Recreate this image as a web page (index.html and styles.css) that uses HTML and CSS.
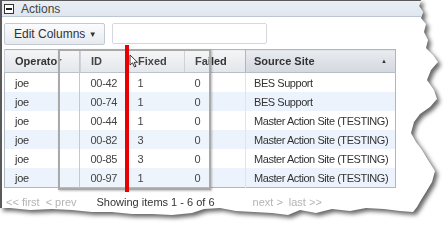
FILE: index.html
```html
<!DOCTYPE html>
<html lang="en">
<head>
    <meta charset="UTF-8">
    <title>Actions</title>
    <link rel="stylesheet" href="styles.css">
</head>
<body>

<div class="frame">
<div class="panel">

    <!-- panel title -->
    <div class="panel-head">
        <span class="collapse"></span>
        <span class="panel-title">Actions</span>
    </div>

    <!-- toolbar -->
    <div class="toolbar">
        <button class="edit-btn">Edit Columns <span class="caret">&#9660;</span></button>
        <input type="text" class="filter">
    </div>

    <!-- grid -->
    <div class="grid-wrap">
        <table class="grid">
            <colgroup>
                <col class="c-op"><col class="c-id"><col class="c-fx"><col class="c-fl"><col class="c-src">
            </colgroup>
            <thead>
                <tr>
                    <th>Operator</th>
                    <th>ID</th>
                    <th>Fixed</th>
                    <th>Failed</th>
                    <th class="sorted">Source Site <span class="sort">&#9650;</span></th>
                </tr>
            </thead>
            <tbody>
                <tr><td>joe</td><td>00-42</td><td>1</td><td>0</td><td class="src">BES Support</td></tr>
                <tr><td>joe</td><td>00-74</td><td>1</td><td>0</td><td class="src">BES Support</td></tr>
                <tr><td>joe</td><td>00-44</td><td>1</td><td>0</td><td class="src">Master Action Site (TESTING)</td></tr>
                <tr><td>joe</td><td>00-82</td><td>3</td><td>0</td><td class="src">Master Action Site (TESTING)</td></tr>
                <tr><td>joe</td><td>00-85</td><td>3</td><td>0</td><td class="src">Master Action Site (TESTING)</td></tr>
                <tr><td>joe</td><td>00-97</td><td>1</td><td>0</td><td class="src">Master Action Site (TESTING)</td></tr>
            </tbody>
        </table>

        <!-- column being dragged -->
        <div class="drag-ghost"><div class="ghost-line"></div></div>
        <div class="drop-marker"></div>
        <svg class="cursor" width="10" height="14" viewBox="0 0 10 14">
            <path d="M1 1 L1 11 L3.5 8.8 L5.5 13 L7 12.3 L5.2 8.3 L8.5 8.3 Z" fill="#fff" stroke="#222" stroke-width="0.9" stroke-linejoin="round"/>
        </svg>
    </div>

    <!-- paging -->
    <div class="pager">
        <span class="pg-link">&lt;&lt; first</span>
        <span class="pg-link">&lt; prev</span>
        <span class="pg-info">Showing items 1 - 6 of 6</span>
        <span class="pg-link">next &gt;</span>
        <span class="pg-link">last &gt;&gt;</span>
    </div>

</div>
</div>

</body>
</html>
```

FILE: styles.css
```css
body {
    margin: 0;
    background-color: #fff;
    font-family: "Liberation Sans", Arial, sans-serif;
    color: #333;
}

.frame {
    width: 444px;
    height: 240px;
    filter: drop-shadow(3px 3px 2px rgba(0, 0, 0, 0.6));
}

/* torn paper edge on the right and bottom */
.panel {
    width: 444px;
    height: 224px;
    box-sizing: border-box;
    background-color: #fff;
    border-left: 2px solid #5a5a5a;
    border-top: 1px solid #5a5a5a;
    clip-path: polygon(0 0, 421px 0, 419px 6px, 423px 12px, 421px 18px, 426px 24px, 424px 32px, 428px 40px, 426px 48px, 433px 55px, 438px 62px, 431px 70px, 427px 80px, 434px 90px, 437px 99px, 430px 107px, 420px 114px, 414px 122px, 411px 133px, 416px 142px, 422px 150px, 428px 160px, 435px 171px, 432px 182px, 426px 192px, 421px 200px, 417px 207px, 413px 212px, 400px 211px, 384px 209px, 366px 208px, 350px 211px, 332px 209px, 316px 213px, 300px 210px, 288px 215px, 272px 213px, 254px 212px, 236px 211px, 220px 208px, 204px 209px, 192px 213px, 172px 215px, 152px 214px, 132px 214px, 112px 212px, 92px 212px, 72px 210px, 52px 209px, 30px 210px, 10px 208px, 0 208px);
}

.panel-head {
    height: 15px;
    display: flex;
    align-items: center;
    gap: 7px;
    padding-left: 2px;
    background: linear-gradient(#eaeff6, #dfe6ef);
    border-bottom: 1px solid #bcc6d2;
}

.collapse {
    width: 8px;
    height: 8px;
    border: 1px solid #333;
    background-color: #fff;
    position: relative;
}

.collapse::after {
    content: "";
    position: absolute;
    left: 1px;
    right: 1px;
    top: 3px;
    height: 2px;
    background-color: #222;
}

.panel-title {
    font-size: 12px;
    color: #444;
}

.toolbar {
    display: flex;
    gap: 7px;
    padding: 6px 0 0 2px;
}

.edit-btn {
    width: 101px;
    height: 22px;
    padding: 0 0 0 9px;
    text-align: left;
    font-family: "Liberation Sans", Arial, sans-serif;
    font-size: 12px;
    color: #333;
    border: 1px solid #c3cad3;
    border-radius: 2px;
    background: linear-gradient(#fbfcfd, #e6eaef);
}

.caret {
    font-size: 8px;
    position: relative;
    top: -1px;
}

.filter {
    width: 155px;
    height: 21px;
    box-sizing: border-box;
    border: 1px solid #d5d9df;
    border-radius: 2px;
}

.grid-wrap {
    position: relative;
    margin: 4px 0 0 2px;
    width: 391px;
}

.grid {
    width: 391px;
    border-collapse: collapse;
    table-layout: fixed;
    border: 1px solid #aeb6c0;
    font-size: 11px;
}

.c-op { width: 76px; }
.c-id { width: 47px; }
.c-fx { width: 57px; }
.c-fl { width: 61px; }
.c-src { width: 150px; }

.grid th {
    height: 22px;
    padding: 0 0 0 10px;
    text-align: left;
    font-weight: bold;
    color: #333;
    white-space: nowrap;
    overflow: hidden;
    background: linear-gradient(#f4f5f7, #e2e5ea);
    border-left: 1px solid #c9cfd7;
    border-bottom: 1px solid #b6bec8;
}

.grid th.sorted {
    position: relative;
    padding-left: 8px;
    background: linear-gradient(#e9ecf0, #d3d8df);
    border-left-color: #aeb6c0;
}

.sort {
    position: absolute;
    right: 8px;
    top: 8px;
    font-size: 6px;
}

.grid td {
    height: 19px;
    padding: 0 0 0 10px;
    white-space: nowrap;
    color: #333;
    letter-spacing: -0.3px;
}

.grid td.src {
    padding-left: 8px;
    letter-spacing: -0.45px;
    border-left: 1px solid #dfe5ee;
}

.grid tbody tr:nth-child(even) td {
    background-color: #edf3fc;
}

.drag-ghost {
    position: absolute;
    left: 54px;
    top: 0;
    width: 149px;
    height: 137px;
    border: 2px solid #a9a9a9;
    box-shadow: 1px 1px 2px rgba(0, 0, 0, 0.25);
    background-color: rgba(255, 255, 255, 0.08);
}

.ghost-line {
    position: absolute;
    left: 19px;
    top: 0;
    bottom: 0;
    border-left: 1px solid #c2c8d0;
}

.drop-marker {
    position: absolute;
    left: 121px;
    top: -4px;
    width: 4px;
    height: 147px;
    background-color: #e80000;
}

.cursor {
    position: absolute;
    left: 125px;
    top: 5px;
}

.pager {
    display: flex;
    align-items: center;
    height: 16px;
    margin-top: 6px;
    padding-left: 4px;
    font-size: 11px;
}

.pg-link {
    color: #b4b4b4;
    margin-right: 6px;
}

.pg-info {
    color: #333;
    margin: 0 38px 0 14px;
}
```
